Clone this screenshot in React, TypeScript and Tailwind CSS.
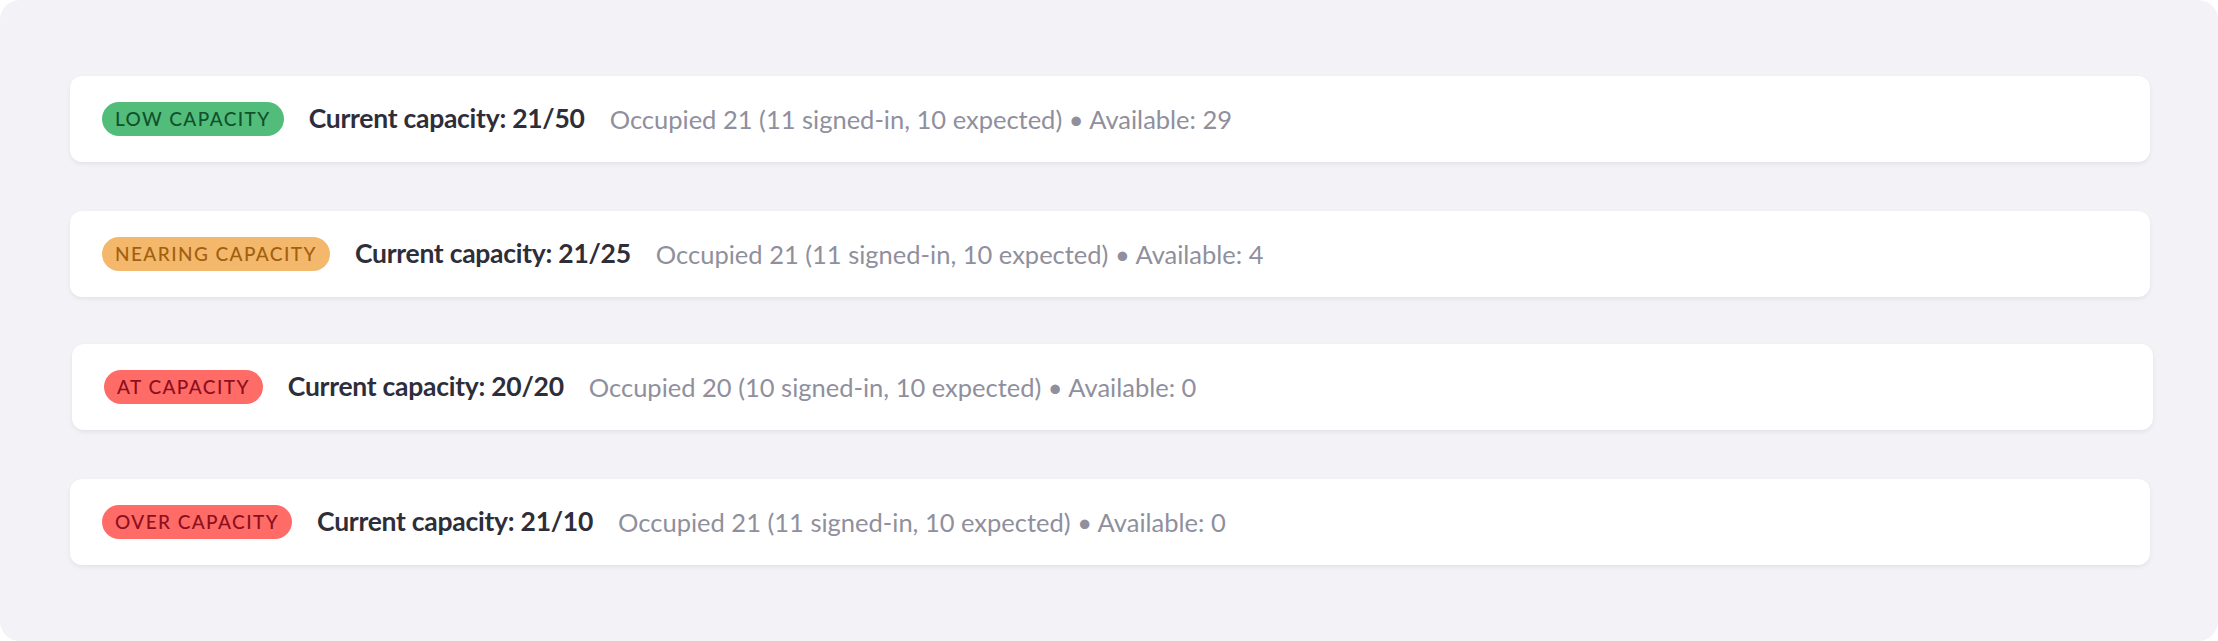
import React from 'react';

const rows = [
  {
    label: 'Low capacity',
    badge: 'bg-[#52bd7b] text-[#11512c]',
    current: '21/50',
    occupied: 21,
    signedIn: 11,
    expected: 10,
    available: 29,
  },
  {
    label: 'Nearing capacity',
    badge: 'bg-[#f3b86b] text-[#a2600f]',
    current: '21/25',
    occupied: 21,
    signedIn: 11,
    expected: 10,
    available: 4,
  },
  {
    label: 'At capacity',
    badge: 'bg-[#ff6b66] text-[#8c0f1f]',
    current: '20/20',
    occupied: 20,
    signedIn: 10,
    expected: 10,
    available: 0,
    shift: true,
  },
  {
    label: 'Over capacity',
    badge: 'bg-[#ff6b66] text-[#8c0f1f]',
    current: '21/10',
    occupied: 21,
    signedIn: 11,
    expected: 10,
    available: 0,
  },
];

export default function App() {
  return (
    <div className="bg-white min-h-[641px] font-['Lato',_'Open_Sans',_sans-serif]">
      <div className="min-h-[641px] bg-[#f3f3f7] rounded-[20px] pl-[70px] pr-[68px] pt-[76px] pb-[75px] flex flex-col gap-[49px]">
        {rows.map(r => (
          <CapacityRow key={r.label} row={r} />
        ))}
      </div>
    </div>
  );
}

function CapacityRow({ row }: any) {
  return (
    <div
      className={`h-[86px] bg-white rounded-[12px] shadow-[0_2px_4px_rgba(30,30,60,0.08)] flex items-center pl-[32px] gap-[25px] ${
        row.shift ? 'ml-[2px] -mr-[3px] -mt-[2px]' : ''
      }`}
    >
      <span
        className={`h-[34px] px-[13px] rounded-full flex items-center text-[19px] font-medium uppercase tracking-[0.075em] ${row.badge}`}
      >
        {row.label}
      </span>
      <span className="text-[26.5px] font-bold text-[#2e2e3b] tracking-[-0.01em]">Current capacity: {row.current}</span>
      <span className="text-[25.5px] text-[#8f8f9d]">
        Occupied {row.occupied} ({row.signedIn} signed-in, {row.expected} expected) • Available: {row.available}
      </span>
    </div>
  );
}
